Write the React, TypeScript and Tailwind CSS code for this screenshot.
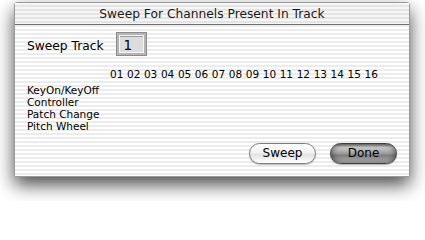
const channels = ['01', '02', '03', '04', '05', '06', '07', '08', '09', '10', '11', '12', '13', '14', '15', '16'];
const events = ['KeyOn/KeyOff', 'Controller', 'Patch Change', 'Pitch Wheel'];

export default function App() {
    return (
        <div className="w-[425px] h-[201px] bg-white overflow-hidden font-['DejaVu_Sans',sans-serif] text-black">
            <div className="ml-[14px] mt-[2px] w-[396px] h-[175px] flex flex-col border border-[#9a9a9a] rounded-t-[3px] shadow-[0_8px_18px_rgba(0,0,0,0.7)] bg-[repeating-linear-gradient(180deg,#ffffff_0px,#ffffff_2px,#ececec_2px,#ececec_4px)]">
                {/* Title bar */}
                <div className="h-[22px] shrink-0 border-b border-[#6e6e6e] bg-[repeating-linear-gradient(180deg,#f6f6f6_0px,#f6f6f6_2px,#e4e4e4_2px,#e4e4e4_4px)] text-center text-[12.25px] leading-[22px] text-[#1a1a1a]">
                    Sweep For Channels Present In Track
                </div>

                {/* Body */}
                <div className="flex-1 flex flex-col pl-[12px] pr-[12px]">
                    <div className="flex items-start gap-[12px] mt-[7px]">
                        <span className="mt-[6px] text-[12.25px] leading-[16px]">Sweep Track</span>
                        <div className="w-[31px] h-[24px] bg-[#b4b4b4] border border-[#8c8c8c] p-[2px]">
                            <div className="w-full h-full bg-[#dcdcdc] border border-[#f6f6f6] shadow-[inset_0_1px_0_#9a9a9a] pl-[4px] text-[13.5px] leading-[18px]">
                                1
                            </div>
                        </div>
                    </div>

                    <div className="mt-[12px] ml-[83px] flex gap-[3.6px] text-[10.5px] leading-[12px]">
                        {channels.map(c => (
                            <span key={c}>{c}</span>
                        ))}
                    </div>

                    <div className="mt-[4px] flex flex-col text-[10.5px] leading-[12px]">
                        {events.map(e => (
                            <span key={e}>{e}</span>
                        ))}
                    </div>

                    <div className="mt-[11px] flex justify-end gap-[14px]">
                        <button className="w-[67px] h-[21px] rounded-full border border-[#7c7c7c] bg-[linear-gradient(180deg,#ffffff_0%,#f2f2f2_45%,#e2e2e2_55%,#ffffff_100%)] shadow-[0_1px_1px_rgba(0,0,0,0.25)] text-[12px] leading-[19px]">
                            Sweep
                        </button>
                        <button className="w-[67px] h-[21px] rounded-full border border-[#3c3c3c] bg-[linear-gradient(180deg,#8a8a8a_0%,#d4d4d4_18%,#9a9a9a_50%,#7e7e7e_60%,#c4c4c4_100%)] shadow-[inset_0_0_6px_rgba(0,0,0,0.6),0_1px_1px_rgba(0,0,0,0.3)] text-[12px] leading-[19px]">
                            Done
                        </button>
                    </div>
                </div>
            </div>
        </div>
    );
}
